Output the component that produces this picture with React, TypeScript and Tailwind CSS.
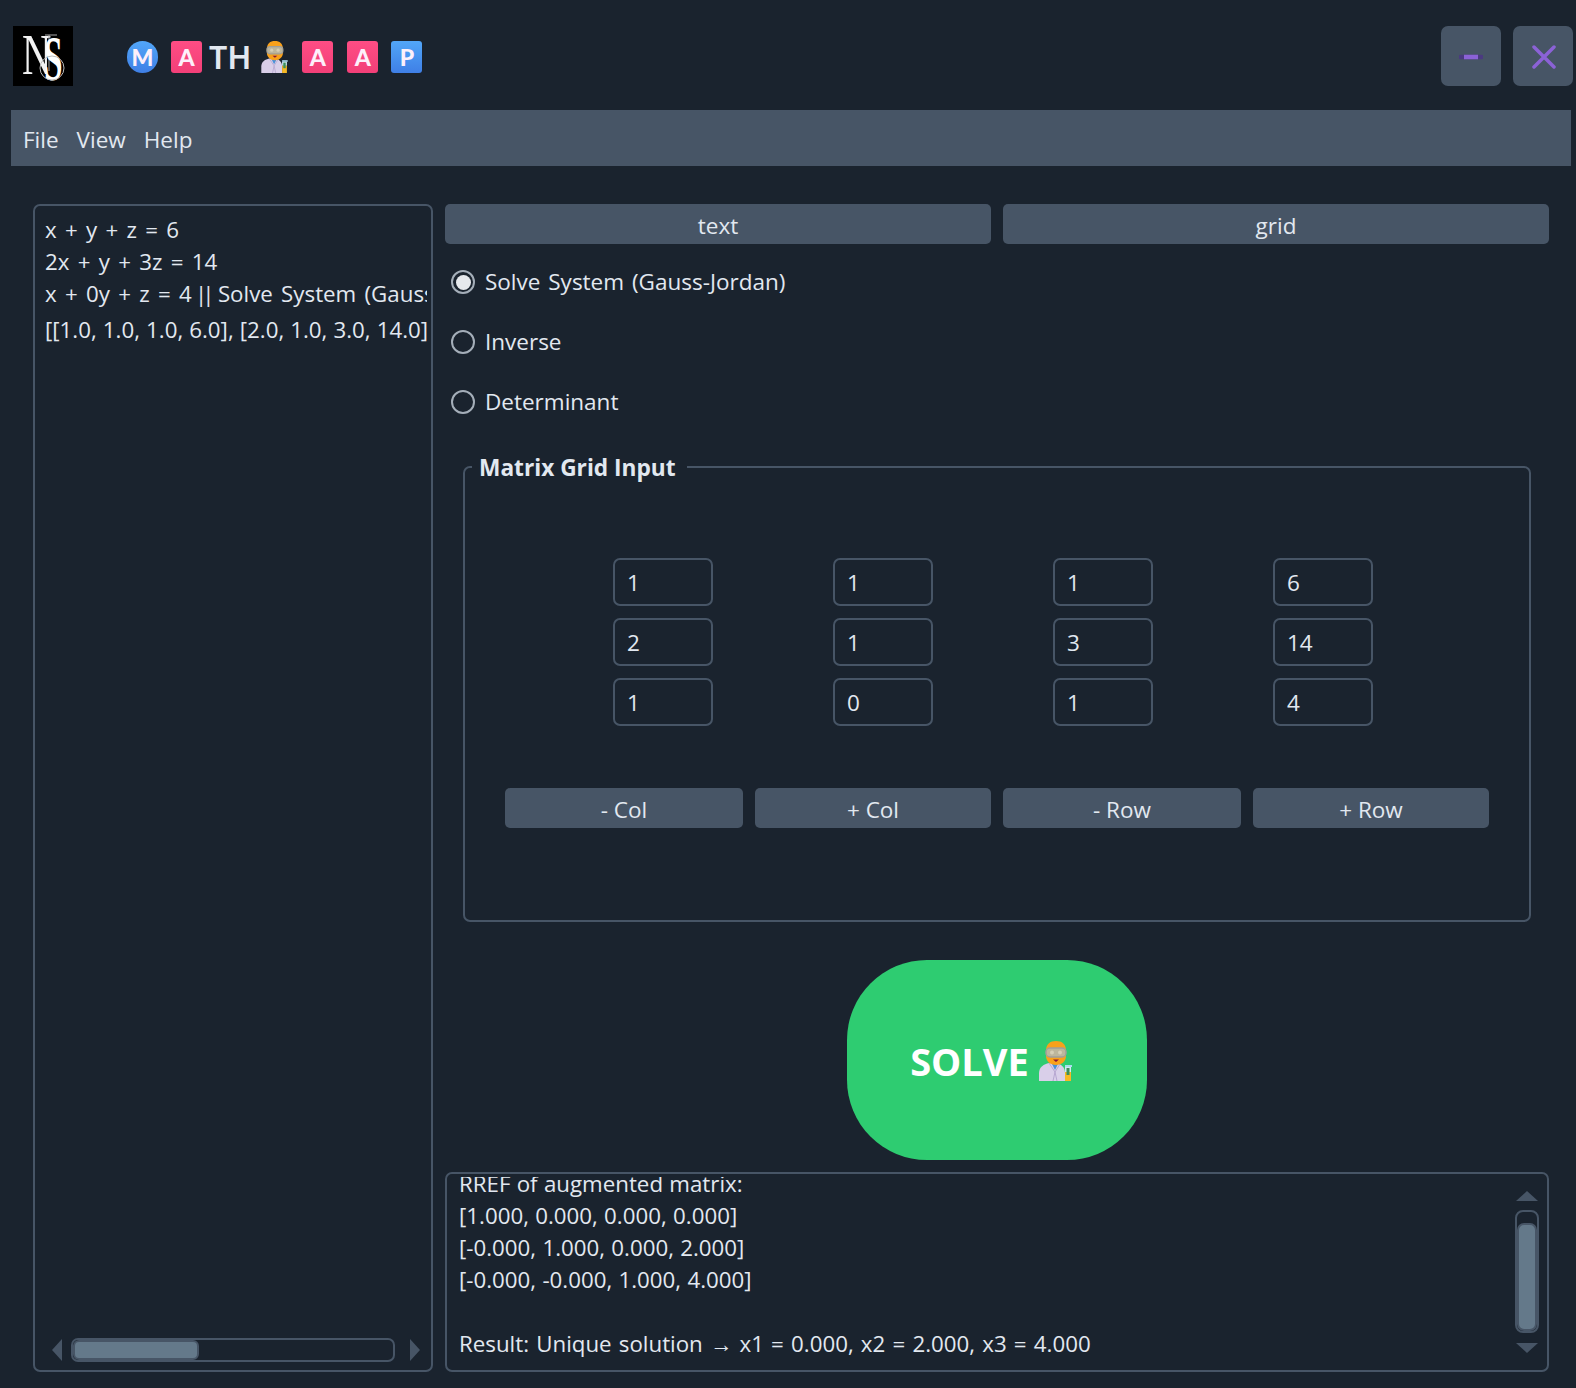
import type { ReactNode } from 'react'

const matrix = [
  ['1', '1', '1', '6'],
  ['2', '1', '3', '14'],
  ['1', '0', '1', '4'],
]

const outputLines = [
  'RREF of augmented matrix:',
  '[1.000, 0.000, 0.000, 0.000]',
  '[-0.000, 1.000, 0.000, 2.000]',
  '[-0.000, -0.000, 1.000, 4.000]',
  '\u00a0',
]

function Scientist({ className }: { className: string }) {
  return (
    <svg viewBox="0 0 33 40" className={className}>
      <path d="M0 40v-8c0-6 5-9 10-10h7c5 1 9 4 9 10v8z" fill="#d9cfe9" />
      <path d="M13 23l3 6 3-6z" fill="#4a90d9" />
      <path d="M10 22l6 9-2 9M21 23l-5 8 2 9" stroke="#b5a6d0" strokeWidth="1" fill="none" />
      <path d="M7 10c0-7 4-10 10-10s10 3 10 10v5c0 5-4 9-10 9s-10-4-10-9z" fill="#f9a11b" />
      <rect x="7" y="7" width="20" height="9" rx="4" fill="#bdb69c" stroke="#a09f9a" strokeWidth="1.5" />
      <circle cx="13" cy="11.5" r="2" fill="#d6cfb6" />
      <circle cx="21" cy="11.5" r="2" fill="#d6cfb6" />
      <path d="M14 18.5h6l-3 2.5z" fill="#8a1538" />
      <rect x="26" y="24" width="7" height="2" fill="#a9dcef" />
      <path d="M26 26h6v5h-6z" fill="#cfe9f3" />
      <path d="M26 31h6v9h-6z" fill="#f7b924" />
      <rect x="27.5" y="27" width="3" height="7" fill="#3d8f5a" />
    </svg>
  )
}

function Badge({ children, round, blue }: { children: ReactNode; round?: boolean; blue?: boolean }) {
  return (
    <span
      className={`flex h-[32px] w-[31px] items-center justify-center font-['Lato'] text-[23px] font-black leading-none text-[#fdf0fa] ${
        round ? 'rounded-full' : 'rounded-[3px]'
      } ${blue ? 'bg-linear-to-b from-[#52a6f8] to-[#3f7fe6]' : 'bg-linear-to-b from-[#ff4d84] to-[#f23f78]'}`}
    >
      {children}
    </span>
  )
}

function FlatButton({ label }: { label: string }) {
  return (
    <button className="flex h-[40px] items-center justify-center rounded-[5px] bg-[#475566] pt-[4px] text-[22.5px] text-[#e2e8f0]">
      {label}
    </button>
  )
}

function Radio({ label, checked }: { label: string; checked?: boolean }) {
  return (
    <div className="flex h-[60px] items-center pl-[6px]">
      <span className="flex h-[24px] w-[24px] items-center justify-center rounded-full border-2 border-[#a4aeb9]">
        {checked && <span className="h-[15px] w-[15px] rounded-full bg-[#e6e9ed]" />}
      </span>
      <span className="ml-[10px] text-[22.5px] [word-spacing:2px]">{label}</span>
    </div>
  )
}

export default function App() {
  return (
    <div className="flex h-[1388px] w-[1576px] flex-col overflow-hidden bg-[#1a232e] font-['Open_Sans',sans-serif] text-[#e2e8f0]">
      {/* Title bar */}
      <header className="flex h-[110px] items-start pl-[13px] pr-[3px] pt-[26px]">
        <svg viewBox="0 0 60 60" className="h-[60px] w-[60px] bg-black">
          <text transform="translate(9,48) scale(0.7,1)" fontFamily="Liberation Serif" fontSize="58" fill="#f2f2f2">N</text>
          <path d="M36 9v36M32 9h12" stroke="#a8a8a8" strokeWidth="1" fill="none" />
          <text transform="translate(31,54) scale(0.52,1)" fontFamily="Liberation Serif" fontSize="64" fontWeight="700" fill="#ffffff">S</text>
          <circle cx="39" cy="42" r="12" fill="none" stroke="#bdbdbd" strokeWidth="1" />
        </svg>
        <div className="ml-[54px] mt-[15px] flex h-[32px] items-center">
          <Badge round blue>M</Badge>
          <span className="ml-[13px]"><Badge>A</Badge></span>
          <span className="ml-[7px] font-['Noto_Sans'] text-[32px] font-semibold leading-none">TH</span>
          <Scientist className="ml-[10px] h-[32px] w-[27px]" />
          <span className="ml-[14px]"><Badge>A</Badge></span>
          <span className="ml-[14px]"><Badge>A</Badge></span>
          <span className="ml-[13px]"><Badge blue>P</Badge></span>
        </div>
        <div className="ml-auto flex gap-3">
          <button className="flex h-[60px] w-[60px] items-center justify-center rounded-[7px] bg-[#475566] pt-[2px]">
            <svg viewBox="0 0 24 24" className="h-[24px] w-[24px]">
              <path d="M1.5 12h21" stroke="#4b3a80" strokeWidth="4.5" strokeLinecap="round" />
              <path d="M5 12h14" stroke="#8b62d6" strokeWidth="4.5" />
            </svg>
          </button>
          <button className="flex h-[60px] w-[60px] items-center justify-center rounded-[7px] bg-[#475566] pl-[2px] pt-[2px]">
            <svg viewBox="0 0 24 24" className="h-[24px] w-[24px]">
              <path d="M2 2l20 20M22 2L2 22" stroke="#8b62d6" strokeWidth="3.5" strokeLinecap="round" />
            </svg>
          </button>
        </div>
      </header>

      {/* Menu bar */}
      <nav className="ml-[11px] mr-[5px] flex h-[56px] items-center gap-[18px] bg-[#475566] pl-[12px] pt-[4px] text-[22.5px]">
        <span>File</span>
        <span>View</span>
        <span>Help</span>
      </nav>

      <main className="flex flex-1 gap-3 pb-[16px] pl-[33px] pr-[27px] pt-[38px]">
        {/* Input list */}
        <section className="flex w-[400px] flex-col rounded-[7px] border-2 border-[#475566] pb-[8px] pl-[10px] pr-[4px] pt-[8px]">
          <div className="flex-1 overflow-hidden whitespace-nowrap text-[22.3px] leading-[32px] [word-spacing:2.5px]">
            <div>x + y + z = 6</div>
            <div>2x + y + 3z = 14</div>
            <div>
              x + 0y + z = 4 <span className="-ml-[5px] tracking-[-5px]">||</span> Solve System (Gauss-Jordan)
            </div>
            <div className="mt-[4px] [word-spacing:0.3px]">[[1.0, 1.0, 1.0, 6.0], [2.0, 1.0, 3.0, 14.0], [1.0, 0.0, 1.0, 4.0]]</div>
          </div>
          <div className="flex h-[24px] items-center pl-[1px]">
            <svg viewBox="0 0 10 22" className="ml-[6px] h-[22px] w-[10px]"><path d="M10 0v22L0 11z" fill="#475566" /></svg>
            <div className="ml-[9px] h-[24px] w-[324px] rounded-[7px] border-2 border-[#475566]">
              <div className="h-full w-[126px] rounded-[6px] border-2 border-[#475566] bg-[#64798a]" />
            </div>
            <svg viewBox="0 0 10 22" className="ml-[15px] h-[22px] w-[10px]"><path d="M0 0v22l10-11z" fill="#475566" /></svg>
          </div>
        </section>

        {/* Right column */}
        <section className="flex w-[1104px] flex-col">
          <div className="grid grid-cols-2 gap-3">
            <FlatButton label="text" />
            <FlatButton label="grid" />
          </div>
          <div className="mt-[8px]">
            <Radio label="Solve System (Gauss-Jordan)" checked />
            <Radio label="Inverse" />
            <Radio label="Determinant" />
          </div>

          <div className="relative mx-[18px] mt-[34px] h-[456px] rounded-[7px] border-2 border-[#475566] pl-[148px] pt-[90px]">
            <span className="absolute left-[7px] top-[-16px] bg-[#1a232e] pl-[7px] pr-[11px] text-[22.7px] font-bold leading-[32px]">
              Matrix Grid Input
            </span>
            <div className="grid grid-cols-[repeat(4,100px)] gap-x-[120px] gap-y-[12px]">
              {matrix.flat().map((value, i) => (
                <div
                  key={i}
                  className="flex h-[48px] items-center rounded-[7px] border-2 border-[#475566] pl-[12px] pt-[2px] text-[22.5px]"
                >
                  {value}
                </div>
              ))}
            </div>
            <div className="-ml-[108px] mt-[62px] grid grid-cols-[238px_236px_238px_236px] gap-3">
              <FlatButton label="- Col" />
              <FlatButton label="+ Col" />
              <FlatButton label="- Row" />
              <FlatButton label="+ Row" />
            </div>
          </div>

          <button className="mx-auto mt-[38px] flex h-[200px] w-[300px] items-center justify-center rounded-[80px] bg-[#2ecc71] pr-[12px] pt-[2px] text-[38px] font-bold text-white">
            SOLVE
            <Scientist className="ml-[10px] h-[40px] w-[33px]" />
          </button>

          {/* Output */}
          <div className="mt-[12px] flex h-[200px] rounded-[7px] border-2 border-[#475566] pl-[12px] pr-[8px] pt-[3px]">
            <div className="flex flex-1 flex-col justify-end overflow-hidden whitespace-nowrap pb-[9px] text-[22.3px] leading-[32px] [word-spacing:0.5px]">
              {outputLines.map((line, i) => (
                <div key={i} className="shrink-0">{line}</div>
              ))}
              <div className="shrink-0 [word-spacing:1.4px]">
                Result: Unique solution <span className="font-['Liberation_Sans']">→</span> x1 = 0.000, x2 = 2.000, x3 = 4.000
              </div>
            </div>
            <div className="flex w-[24px] flex-col items-center pt-[14px]">
              <svg viewBox="0 0 22 10" className="h-[10px] w-[22px]"><path d="M0 10h22L11 0z" fill="#475566" /></svg>
              <div className="mt-[9px] flex h-[123px] w-[24px] flex-col justify-end rounded-[8px] border-2 border-[#475566]">
                <div className="h-[108px] rounded-[7px] border-2 border-[#475566] bg-[#64798a]" />
              </div>
              <svg viewBox="0 0 22 10" className="mt-[10px] h-[10px] w-[22px]"><path d="M0 0h22L11 10z" fill="#475566" /></svg>
            </div>
          </div>
        </section>
      </main>
    </div>
  )
}
